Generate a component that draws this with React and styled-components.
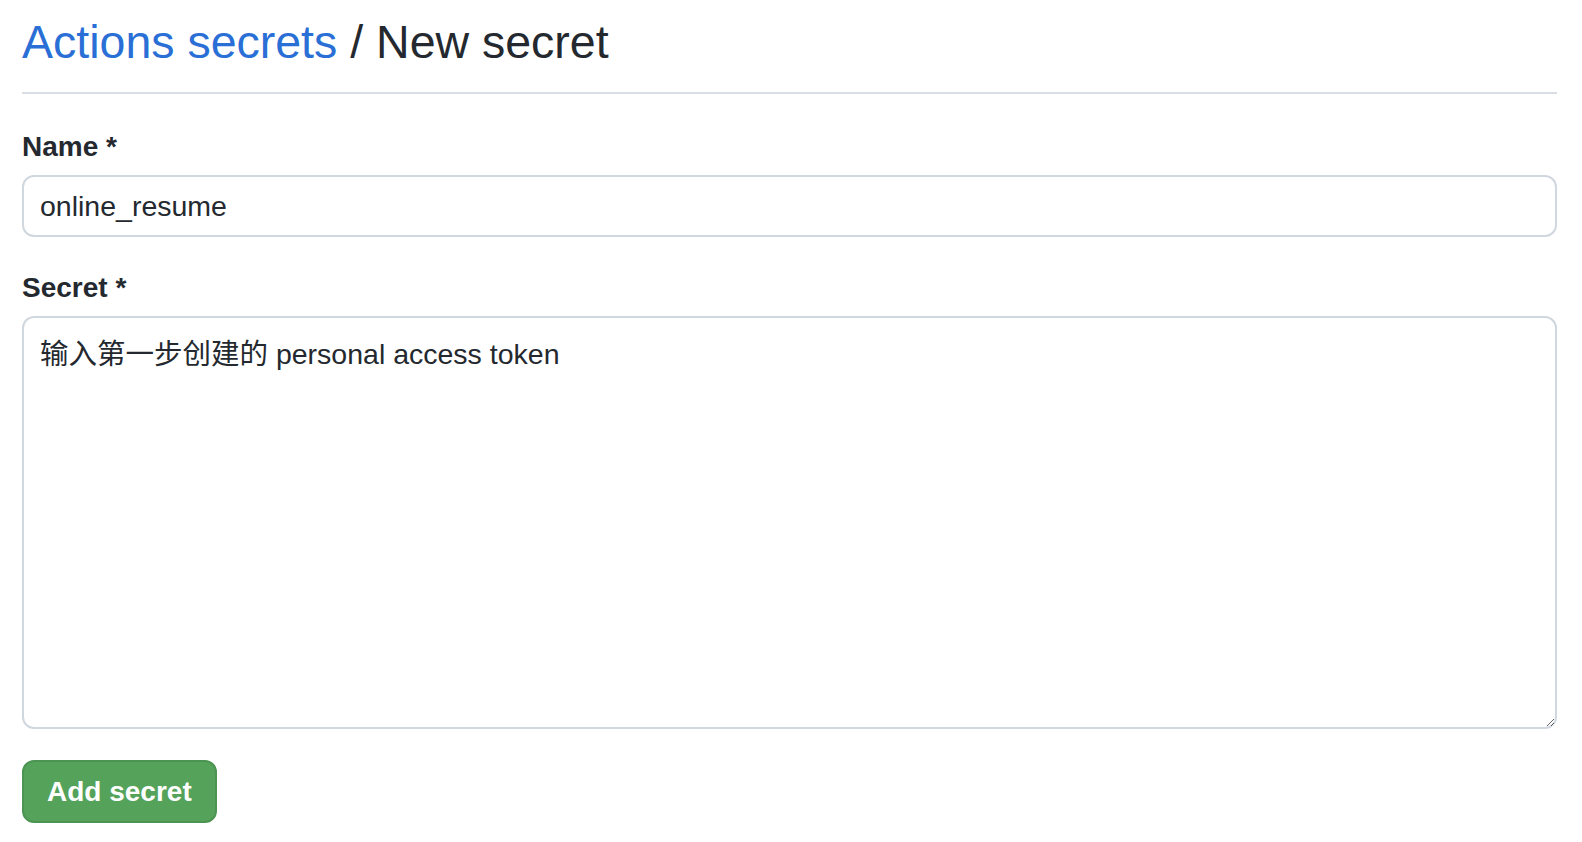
import React from "react";
import styled, { createGlobalStyle } from "styled-components";

const GlobalStyle = createGlobalStyle`
  body {
    margin: 0;
    background: #ffffff;
    font-family: "Liberation Sans", Arial, "Noto Sans CJK SC", sans-serif;
    color: #24292f;
  }
`;

export default function App() {
  return (
    <>
      <GlobalStyle />
      <Page>
        <Subhead>
          <Heading>
            <a href="#secrets">Actions secrets</a> / New secret
          </Heading>
        </Subhead>
        <form onSubmit={(e) => e.preventDefault()}>
          <FormGroup>
            <Label htmlFor="secret_name">Name *</Label>
            <TextInput id="secret_name" type="text" defaultValue="online_resume" />
          </FormGroup>
          <FormGroup>
            <Label htmlFor="secret_value">Secret *</Label>
            <TextArea
              id="secret_value"
              defaultValue="输入第一步创建的 personal access token"
            />
          </FormGroup>
          <SubmitButton type="submit">Add secret</SubmitButton>
        </form>
      </Page>
    </>
  );
}

const Page = styled.div`
  padding: 14px 25px 0 22px;
`;

const Subhead = styled.div`
  padding-bottom: 21px;
  border-bottom: 2px solid #d8dee4;
`;

const Heading = styled.h2`
  margin: 0;
  font-size: 46.5px;
  line-height: 57px;
  font-weight: 400;
  color: #24292f;

  a {
    color: #2a6fd6;
    text-decoration: none;
  }
`;

const FormGroup = styled.div`
  margin-top: 35px;

  & + & {
    margin-top: 33px;
  }
`;

const Label = styled.label`
  display: block;
  margin-bottom: 10px;
  font-size: 28px;
  line-height: 36px;
  font-weight: 700;
  color: #24292f;
`;

const fieldBase = `
  display: block;
  width: 100%;
  box-sizing: border-box;
  border: 2px solid #d0d7de;
  border-radius: 12px;
  background: #ffffff;
  color: #24292f;
  font-family: "Liberation Sans", Arial, "Noto Sans CJK SC", sans-serif;
  font-size: 28.5px;
  outline: none;
`;

const TextInput = styled.input`
  ${fieldBase}
  height: 62px;
  padding: 0 16px;
  line-height: 40px;
`;

const TextArea = styled.textarea`
  ${fieldBase}
  height: 413px;
  padding: 16px 16px;
  line-height: 1.45;
  resize: vertical;
`;

const SubmitButton = styled.button`
  margin-top: 31px;
  height: 63px;
  padding: 0 23px;
  border: 2px solid #4c9452;
  border-radius: 12px;
  background: #55a25b;
  color: #ffffff;
  font-family: "Liberation Sans", Arial, sans-serif;
  font-size: 28px;
  font-weight: 700;
  cursor: pointer;
`;
